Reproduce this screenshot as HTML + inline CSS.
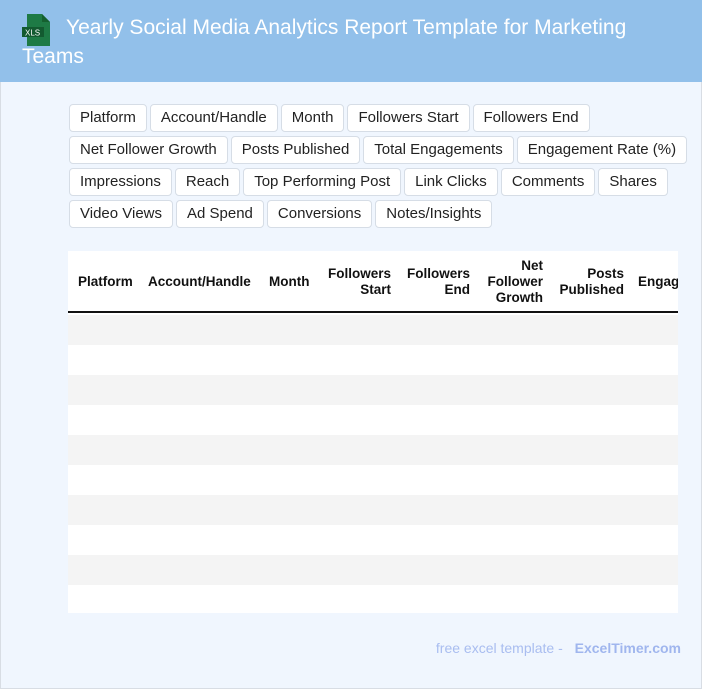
<!DOCTYPE html>
<html><head><style>
*{margin:0;padding:0;box-sizing:border-box}
body{width:702px;height:689px;background:#f0f6fe;font-family:"Liberation Sans",Arial,sans-serif;position:relative;overflow:hidden;border:1px solid #d8dde4}
.hdr{position:absolute;left:-1px;top:-1px;width:702px;height:82px;background:#92c0ea;}
.hdr h1{position:absolute;left:22px;top:13px;width:610px;color:#fff;font-weight:normal;font-size:21px;line-height:29px;text-indent:44px}
.icon{position:absolute;left:22px;top:14px}
.tags{position:absolute;left:68px;top:103px;width:630px}
.tag{display:inline-block;height:28px;line-height:26px;padding:0 10px;background:#fff;border:1px solid #d6dde6;border-radius:4px;font-size:15px;color:#222;margin:0 0 4px 0;margin-right:3px;float:left}
.tags .br{clear:both}
.tbl{position:absolute;left:67px;top:250px;width:610px;height:362px;background:#fff;overflow:hidden}
.th{position:absolute;top:0;height:62px;border-bottom:2px solid #111;width:610px}
.th div{position:absolute;font-weight:bold;font-size:13.5px;line-height:16px;color:#111;top:0;height:62px;display:flex;align-items:center}
.r{position:absolute;left:0;width:610px;height:30px}
.foot{position:absolute;right:20px;top:639px;font-size:14px;color:#a9bdf0}
.foot b{margin-left:8px;color:#a0b6ee}
</style></head><body>
<div class="hdr">
<svg class="icon" width="30" height="32" viewBox="0 0 30 32"><path d="M5 0h15l8 8v24H5z" fill="#1e7a45"/><path d="M20 0l8 8h-8z" fill="#15602f"/><rect x="0" y="13" width="22" height="10" fill="#135a30"/><text x="3" y="21.5" font-size="8" fill="#fff" font-family="Liberation Sans">XLS</text></svg>
<h1>Yearly Social Media Analytics Report Template for Marketing Teams</h1>
</div>
<div class="tags">
<span class="tag">Platform</span><span class="tag">Account/Handle</span><span class="tag">Month</span><span class="tag">Followers Start</span><span class="tag">Followers End</span><div class="br"></div>
<span class="tag">Net Follower Growth</span><span class="tag">Posts Published</span><span class="tag">Total Engagements</span><span class="tag">Engagement Rate (%)</span><div class="br"></div>
<span class="tag">Impressions</span><span class="tag">Reach</span><span class="tag">Top Performing Post</span><span class="tag">Link Clicks</span><span class="tag">Comments</span><span class="tag">Shares</span><div class="br"></div>
<span class="tag">Video Views</span><span class="tag">Ad Spend</span><span class="tag">Conversions</span><span class="tag">Notes/Insights</span>
</div>
<div class="tbl">
<div class="th">
<div style="left:10px">Platform</div>
<div style="left:80px">Account/Handle</div>
<div style="left:201px">Month</div>
<div style="left:250px;width:73px;justify-content:flex-end;text-align:right">Followers<br>Start</div>
<div style="left:330px;width:72px;justify-content:flex-end;text-align:right">Followers<br>End</div>
<div style="left:410px;width:65px;justify-content:flex-end;text-align:right">Net<br>Follower<br>Growth</div>
<div style="left:480px;width:76px;justify-content:flex-end;text-align:right">Posts<br>Published</div>
<div style="left:570px;white-space:nowrap">Engagements</div>
</div>
<div class="r" style="top:64px;background:#f4f4f4"></div>
<div class="r" style="top:124px;background:#f4f4f4"></div>
<div class="r" style="top:184px;background:#f4f4f4"></div>
<div class="r" style="top:244px;background:#f4f4f4"></div>
<div class="r" style="top:304px;background:#f4f4f4"></div>
</div>
<div class="foot">free excel template - <b>ExcelTimer.com</b></div>
</body></html>
